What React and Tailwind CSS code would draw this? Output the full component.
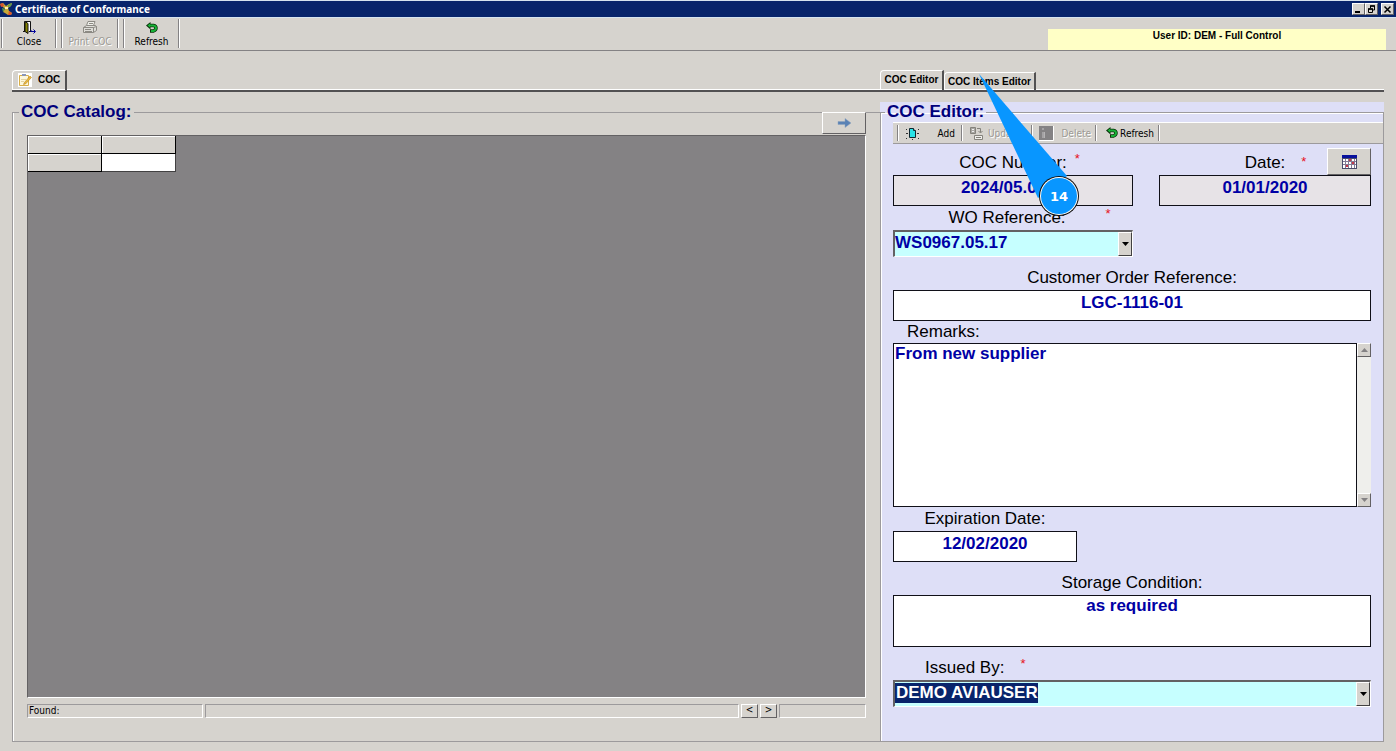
import { useState } from "react";

const RAISED = "border border-t-white border-l-white border-r-[#636163] border-b-[#636163] bg-[#d6d3ce]";
const SUNKEN = "border border-t-[#9c9a9c] border-l-[#9c9a9c] border-r-white border-b-white";
const VALUE = "text-[17px] leading-5 font-bold text-[#0000a5]";
const FIELD = `block w-full rounded-none border border-[#101018] px-px outline-none ${VALUE}`;
const LABEL = "whitespace-nowrap text-[17px] leading-6 text-black";
const TOOL_FONT = "font-['DejaVu_Sans_Condensed','Noto_Sans',sans-serif] text-[10px]";
const DISABLED = "text-[#9c9a94] [text-shadow:1px_1px_0_#fff]";

function AppIcon() {
  return (
    <svg width="13" height="14" viewBox="0 0 13 14" aria-hidden="true">
      <path d="M0 2l3-1 3 3 3-2 3-1-1 3-3 2 1 3 3 2-1 2H8l-3-2-2-1 2-3z" fill="#c8a838" />
      <path d="M0 2l3-1 1 3-3 1zM9 9l3 2-1 2H8z" fill="#d8542c" />
      <path d="M8 3l4-2-1 3-3 1zM2 6l3 1-2 3z" fill="#5ca04c" />
      <path d="M5 5h3v2H5z" fill="#fff3b0" />
    </svg>
  );
}

function DoorIcon() {
  return (
    <svg width="13" height="15" viewBox="0 0 13 15" aria-hidden="true">
      <path d="M1.500 11.500V1.500h6v10" fill="#fff" stroke="#101010" />
      <path d="M2 1.500l3 2v10l-3-2z" fill="#848200" stroke="#101010" />
      <path d="M0 11.500h2M6 11.500h2" stroke="#101010" />
      <path d="M8 10v1.500h4M10.500 9.500l2 2-2 2" fill="none" stroke="#00009c" />
    </svg>
  );
}

function PrinterIcon() {
  return (
    <svg width="16" height="14" viewBox="0 0 16 14" fill="none" stroke="#8c8a84" aria-hidden="true">
      <path d="M4.500 5.500l1.500-4h7l-1.500 4" fill="#efefea" />
      <path d="M1.500 7.500l3-2h9l1 1v4l-3 2h-10z" fill="#deddd8" />
      <path d="M1.500 7.500h10v5M11.500 7.500l3-1M3 9.500h6M7 3.500h4M3 11.500h7" />
    </svg>
  );
}

function RefreshIcon() {
  return (
    <svg width="12" height="12" viewBox="0 0 12 12" aria-hidden="true">
      <path d="M3 3.500h4.500q2.500.5 2.500 2.500t-2.500 3H4" fill="none" stroke="#083008" strokeWidth="3.500" />
      <path d="M0 3.500L4.500 0v7.500z" fill="#083008" />
      <path d="M3 3.500h4.500q2.500.5 2.500 2.500t-2.500 3H5" fill="none" stroke="#18b238" strokeWidth="2" />
      <path d="M1.500 3.500L4 1.500v4z" fill="#18b238" />
    </svg>
  );
}

function NoteIcon() {
  return (
    <svg width="14" height="14" viewBox="0 0 14 14" aria-hidden="true">
      <path d="M0 0h14v14H0z" fill="#fff" />
      <path d="M1.500 2.500h9v10h-9z" fill="#fdf7dc" stroke="#d8ae48" />
      <path d="M4 1h4v2H4z" fill="#8a96b8" />
      <path d="M3 6.500h5M3 8.500h3" stroke="#e2d2a0" />
      <path d="M6 10l6-7 1.500 1.500-6 6.500-2 .5z" fill="#eab83c" stroke="#a87820" strokeWidth=".5" />
    </svg>
  );
}

function AddIcon() {
  return (
    <svg width="13" height="13" viewBox="0 0 13 13" aria-hidden="true">
      <path d="M3.500 1.500h4l2 2v7h-6z" fill="#29e3e7" stroke="#102830" />
      <path d="M7.500 1.500v2h2" fill="#fff" stroke="#102830" />
      <path d="M0 2h1v1H0zM0 6h2v1H0zM0 11h1v1H0zM12 2h1v1h-1zM11 6h2v1h-2zM12 11h1v1h-1zM6 12h1v1H6z" fill="#303030" />
    </svg>
  );
}

function UpdateIcon() {
  return (
    <svg width="14" height="13" viewBox="0 0 14 13" fill="none" stroke="#84827c" aria-hidden="true">
      <path d="M.5.500h5v6h-5z" fill="#a8a6a2" />
      <path d="M2 2.500h2M2 4.500h2" stroke="#eee" />
      <path d="M7 1.500h3.500v4M8.500 4l2 2 2-2" />
      <path d="M4.500 8.500h8v4h-8z" fill="#f0efec" />
      <path d="M6 10.500h5" />
    </svg>
  );
}

function DeleteIcon() {
  return (
    <svg width="15" height="15" viewBox="0 0 15 15" aria-hidden="true">
      <path d="M0 0h14v14H0z" fill="#848284" />
      <path d="M14.500 0v14.500H0" fill="none" stroke="#fff" />
      <path d="M3 2h2v2H3zM3 6h2v6H3z" fill="#a5a3a5" />
      <path d="M5.500 6v6" stroke="#b5b3b5" />
    </svg>
  );
}

function CalendarIcon() {
  return (
    <svg width="15" height="14" viewBox="0 0 15 14" shapeRendering="crispEdges" aria-hidden="true">
      <path d="M0 0h15v14H0z" fill="#4a4c6b" />
      <path d="M0 0h15v3H0z" fill="#08109c" />
      <path d="M1 4h13v9H1z" fill="#fff" />
      <path d="M1 6.500h13M1 9.500h13M3.500 4v9M6.500 4v9M9.500 4v9M12.500 4v9" stroke="#847a94" />
      <path d="M7 4h2v2H7zM10 7h2v2h-2zM4 10h2v2H4z" fill="#c83848" />
    </svg>
  );
}

function Triangle({ up = false }) {
  return (
    <svg width="7" height="4" viewBox="0 0 7 4" aria-hidden="true">
      <path d={up ? "M0 4h7L3.500 0z" : "M0 0h7L3.500 4z"} fill="currentColor" />
    </svg>
  );
}

function Separator() {
  return <span className="w-0.5 shrink-0 self-stretch border-r border-l border-l-[#848284] border-r-white" />;
}

function WindowButton({ label, children }) {
  return (
    <button type="button" aria-label={label} className={`flex h-3 w-[13px] items-center justify-center ${RAISED}`}>
      <svg width="9" height="9" viewBox="0 0 9 9" fill="none" stroke="#000" aria-hidden="true">
        {children}
      </svg>
    </button>
  );
}

function TitleBar() {
  return (
    <header className="flex h-[18px] items-center gap-0.5 border-t border-b border-t-[#d6e3ef] border-b-[#d6e3ef] bg-[#08246b] pr-0.5">
      <AppIcon />
      <h1 className="flex-1 font-['Noto_Sans',sans-serif] text-[10px] leading-4 font-bold text-white">
        Certificate of Conformance
      </h1>
      <div className="flex">
        <WindowButton label="Minimize">
          <path d="M1 7h5" strokeWidth="2" />
        </WindowButton>
        <WindowButton label="Restore">
          <path d="M3.500 3V1h4v4H6M1.500 4h4v3.500h-4z" />
          <path d="M3 1h5M1 4h5" strokeWidth="1.500" />
        </WindowButton>
        <span className="w-[3px]" />
        <WindowButton label="Close window">
          <path d="M1.500 1.500l6 6M7.500 1.500l-6 6" strokeWidth="1.500" />
        </WindowButton>
      </div>
    </header>
  );
}

function MainToolbar() {
  const button = "flex flex-col items-center justify-between leading-3";
  return (
    <div className="flex items-end justify-between border-b border-[#848284] pr-[10px] pl-px">
      <div className={`flex h-8 items-center pt-px pb-0.5 ${TOOL_FONT}`}>
        <Separator />
        <button type="button" className={`${button} h-7 w-[52px]`}>
          <DoorIcon />
          Close
        </button>
        <Separator />
        <span className="w-1" />
        <Separator />
        <button type="button" disabled className={`${button} h-7 w-[54px] ${DISABLED}`}>
          <PrinterIcon />
          Print COC
        </button>
        <Separator />
        <span className="w-1" />
        <Separator />
        <button type="button" className={`${button} h-7 w-[53px] pt-0.5`}>
          <RefreshIcon />
          Refresh
        </button>
        <Separator />
      </div>
      <p className="h-[21px] w-[338px] bg-[#ffffc6] text-center text-[10px] leading-[13px] font-bold">
        User ID: DEM - Full Control
      </p>
    </div>
  );
}

function Tab({ active, onClick, children, className = "" }) {
  return (
    <button
      type="button"
      role="tab"
      aria-selected={active}
      onClick={onClick}
      className={`flex items-center rounded-tl-sm border-t border-r-2 border-l border-t-white border-r-[#525152] border-l-white text-[10px] font-bold whitespace-nowrap ${className}`}
    >
      {children}
    </button>
  );
}

function TabStrip({ label, children }) {
  return (
    <div
      role="tablist"
      aria-label={label}
      className="flex h-[22px] items-end border-b-2 border-[#525152] shadow-[inset_0_-1px_0_#fff]"
    >
      {children}
    </div>
  );
}

function Catalog() {
  const head = "h-[18px] w-[74px] border-r border-b border-black bg-[#d6d3ce] shadow-[inset_1px_1px_0_#fff]";
  return (
    <section className="flex flex-col">
      <TabStrip label="Catalog">
        <Tab active className="h-5 gap-1.5 px-[5px] pb-0.5">
          <NoteIcon />
          COC
        </Tab>
      </TabStrip>
      <fieldset className="mt-2.5 flex flex-1 flex-col border border-r-0 border-[#9c9a9c] pr-[14px] pb-[23px] pl-[14px] shadow-[inset_1px_0_0_#fff]">
        <legend className="-ml-2 px-0.5 text-[17px] leading-5 font-bold text-[#00007b]">COC Catalog:</legend>
        <div className="-mt-2.5 flex h-[23px] justify-end">
          <button
            type="button"
            aria-label="Open selected certificate"
            className={`flex h-[22px] w-11 items-center justify-center ${RAISED}`}
          >
            <svg width="15" height="10" viewBox="0 0 15 10" aria-hidden="true">
              <path d="M1 3.500h7v-3l6 4.500-6 4.500v-3H1z" fill="#5a82b5" stroke="#8ca2bd" strokeWidth=".5" />
            </svg>
          </button>
        </div>
        <div className="flex-1 border border-t-[#636163] border-r-white border-b-white border-l-[#636163] bg-[#848284]">
          <table className="border-separate border-spacing-0" aria-label="COC catalog">
            <thead>
              <tr>
                <th className={head} />
                <th className={head} />
              </tr>
            </thead>
            <tbody>
              <tr>
                <th className={head} />
                <td className="h-[18px] w-[74px] border-r border-b border-[#424142] bg-white" />
              </tr>
            </tbody>
          </table>
        </div>
        <div className={`mt-1.5 flex h-[14px] gap-0.5 ${TOOL_FONT}`}>
          <p className={`w-[176px] pl-px leading-3 ${SUNKEN}`}>Found:</p>
          <span className={`flex-1 ${SUNKEN}`} />
          <button type="button" aria-label="Previous" className={`w-[17px] pb-0.5 leading-[10px] ${RAISED}`}>
            &lt;
          </button>
          <button type="button" aria-label="Next" className={`w-[17px] pb-0.5 leading-[10px] ${RAISED}`}>
            &gt;
          </button>
          <span className={`w-[87px] ${SUNKEN}`} />
        </div>
      </fieldset>
    </section>
  );
}

function EditorToolbar() {
  return (
    <div className={`ml-3 flex h-[22px] items-center border-t border-b border-t-white border-b-[#9c9a9c] bg-[#d6d3ce] py-0.5 pl-1 ${TOOL_FONT}`}>
      <Separator />
      <button type="button" className="flex w-[62px] items-center justify-between pr-1.5 pl-[7px]">
        <AddIcon />
        Add
      </button>
      <Separator />
      <button type="button" disabled className={`flex w-[68px] items-center gap-1 pl-[7px] ${DISABLED}`}>
        <UpdateIcon />
        Update
      </button>
      <Separator />
      <button type="button" disabled className={`flex w-[62px] items-center justify-between pr-1 pl-1.5 ${DISABLED}`}>
        <DeleteIcon />
        Delete
      </button>
      <Separator />
      <button type="button" className="flex w-[61px] items-center justify-end gap-0.5 pr-1">
        <RefreshIcon />
        Refresh
      </button>
      <Separator />
    </div>
  );
}

function Required({ className = "" }) {
  return <span className={`text-[13px] leading-4 text-[#e71021] ${className}`}>*</span>;
}

function ComboBox({ id, options, className = "" }) {
  return (
    <div className="relative h-[27px] border-t-2 border-r border-b border-l-2 border-t-[#636163] border-r-white border-b-white border-l-[#636163]">
      <select
        id={id}
        className={`block h-full w-full appearance-none rounded-none bg-[#c6ffff] pr-4 pb-0.5 outline-none ${VALUE} ${className}`}
      >
        {options.map((option) => (
          <option key={option}>{option}</option>
        ))}
      </select>
      <span className="pointer-events-none absolute inset-y-0 right-0 flex w-[14px] items-center justify-center border border-t-white border-r-[#424142] border-b-[#424142] border-l-white bg-[#d6d3ce]">
        <Triangle />
      </span>
    </div>
  );
}

function Editor() {
  const [tab, setTab] = useState("editor");
  const [form, setForm] = useState({
    orderRef: "LGC-1116-01",
    remarks: "From new supplier",
    expiration: "12/02/2020",
    storage: "as required",
  });
  const update = (name) => (event) => setForm((current) => ({ ...current, [name]: event.target.value }));
  const labelRow = "grid grid-cols-[1fr_auto_1fr]";
  const scrollButton = "flex h-[14px] items-center justify-center text-[#848284]";

  return (
    <section className="relative flex flex-col">
      <TabStrip label="Editor">
        <Tab active={tab === "editor"} onClick={() => setTab("editor")} className="h-5 w-16 justify-center pb-0.5">
          COC Editor
        </Tab>
        <Tab active={tab === "items"} onClick={() => setTab("items")} className="h-[18px] w-[92px] justify-center">
          COC Items Editor
        </Tab>
      </TabStrip>
      <div className="mt-2.5 flex flex-1 flex-col bg-[#dedff7]">
        <fieldset className="flex-1 border border-[#9c9a9c] pb-[34px] shadow-[inset_1px_1px_0_#fff]">
          <legend className="ml-1 px-0.5 text-[17px] leading-5 font-bold text-[#00007b]">COC Editor:</legend>
          <EditorToolbar />
          <div className="pr-3 pl-3">
            <div className="grid grid-cols-[240fr_212fr] gap-x-[26px]">
              <div className="pt-[7px]">
                <div className={labelRow}>
                  <label htmlFor="coc-number" className={`col-start-2 ${LABEL}`}>COC Number:</label>
                  <Required className="pl-2" />
                </div>
                <input id="coc-number" readOnly value="2024/05.0001" className={`h-[31px] bg-[#e7e3e7] pb-1.5 text-center ${FIELD}`} />
              </div>
              <div className="pt-[3px]">
                <div className={`h-7 items-end ${labelRow}`}>
                  <label htmlFor="coc-date" className={`col-start-2 ${LABEL}`}>Date:</label>
                  <div className="flex justify-between pl-4">
                    <Required className="self-center" />
                    <button type="button" aria-label="Pick a date" className={`flex h-[27px] w-11 items-center justify-center ${RAISED}`}>
                      <CalendarIcon />
                    </button>
                  </div>
                </div>
                <input id="coc-date" readOnly value="01/01/2020" className={`h-[31px] bg-[#e7e3e7] pb-1.5 text-center ${FIELD}`} />
              </div>
              <div>
                <div className={`pr-3 ${labelRow}`}>
                  <label htmlFor="wo-reference" className={`col-start-2 ${LABEL}`}>WO Reference:</label>
                  <Required className="pl-10" />
                </div>
                <ComboBox id="wo-reference" options={["WS0967.05.17"]} />
              </div>
            </div>

            <div className="mt-[9px] flex flex-col">
              <label htmlFor="order-reference" className={`self-center ${LABEL}`}>Customer Order Reference:</label>
              <input id="order-reference" value={form.orderRef} onChange={update("orderRef")} className={`h-[31px] bg-white pb-1.5 text-center ${FIELD}`} />
            </div>

            <label htmlFor="remarks" className="block w-fit pl-[14px] text-[17px] leading-[22px] text-black">Remarks:</label>
            <div className="flex h-[164px]">
              <textarea id="remarks" value={form.remarks} onChange={update("remarks")} className={`h-full resize-none overflow-hidden bg-white ${FIELD}`} />
              <div className="flex w-[14px] shrink-0 flex-col justify-between bg-[#efefec]">
                <button type="button" aria-label="Scroll up" className={`${scrollButton} ${RAISED}`}>
                  <Triangle up />
                </button>
                <button type="button" aria-label="Scroll down" className={`${scrollButton} ${RAISED}`}>
                  <Triangle />
                </button>
              </div>
            </div>

            <div className="flex w-[184px] flex-col">
              <label htmlFor="expiration" className={`self-center ${LABEL}`}>Expiration Date:</label>
              <input id="expiration" value={form.expiration} onChange={update("expiration")} className={`h-[31px] bg-white pb-1.5 text-center ${FIELD}`} />
            </div>

            <div className="mt-[9px] flex flex-col">
              <label htmlFor="storage" className={`self-center ${LABEL}`}>Storage Condition:</label>
              <textarea id="storage" value={form.storage} onChange={update("storage")} className={`h-[52px] resize-none bg-white text-center ${FIELD}`} />
            </div>

            <div className="mt-[9px]">
              <div className="flex gap-4 pl-8">
                <label htmlFor="issued-by" className={LABEL}>Issued By:</label>
                <Required />
              </div>
              <ComboBox
                id="issued-by"
                options={["DEMO AVIAUSER"]}
                className="bg-[linear-gradient(#08246b,#08246b)] bg-[length:143px_20px] bg-[position:0_1px] bg-no-repeat pl-px text-white"
              />
            </div>
          </div>
        </fieldset>
      </div>

      <div className="pointer-events-none absolute top-1 left-[99px] h-[143px] w-[101px]">
        <svg width="101" height="143" viewBox="0 0 101 143" aria-hidden="true">
          <path d="M0 0L88 102 59 124z" fill="#0896ff" />
          <circle cx="80" cy="122" r="20" fill="#101010" />
          <circle cx="80" cy="122" r="19" fill="#fff" />
          <circle cx="80" cy="122" r="18" fill="#0896ff" />
        </svg>
        <span className="absolute right-px bottom-0 size-10 text-center font-['DejaVu_Sans',sans-serif] text-[13px] leading-10 font-bold text-white">
          14
        </span>
      </div>
    </section>
  );
}

export default function App() {
  return (
    <div className="flex min-h-screen flex-col border-b border-white bg-[#d6d3ce] font-['Liberation_Sans',Arial,sans-serif] text-black">
      <TitleBar />
      <MainToolbar />
      <main className="grid flex-1 grid-cols-[868fr_504fr] px-3 pt-[19px] pb-[9px]">
        <Catalog />
        <Editor />
      </main>
    </div>
  );
}
